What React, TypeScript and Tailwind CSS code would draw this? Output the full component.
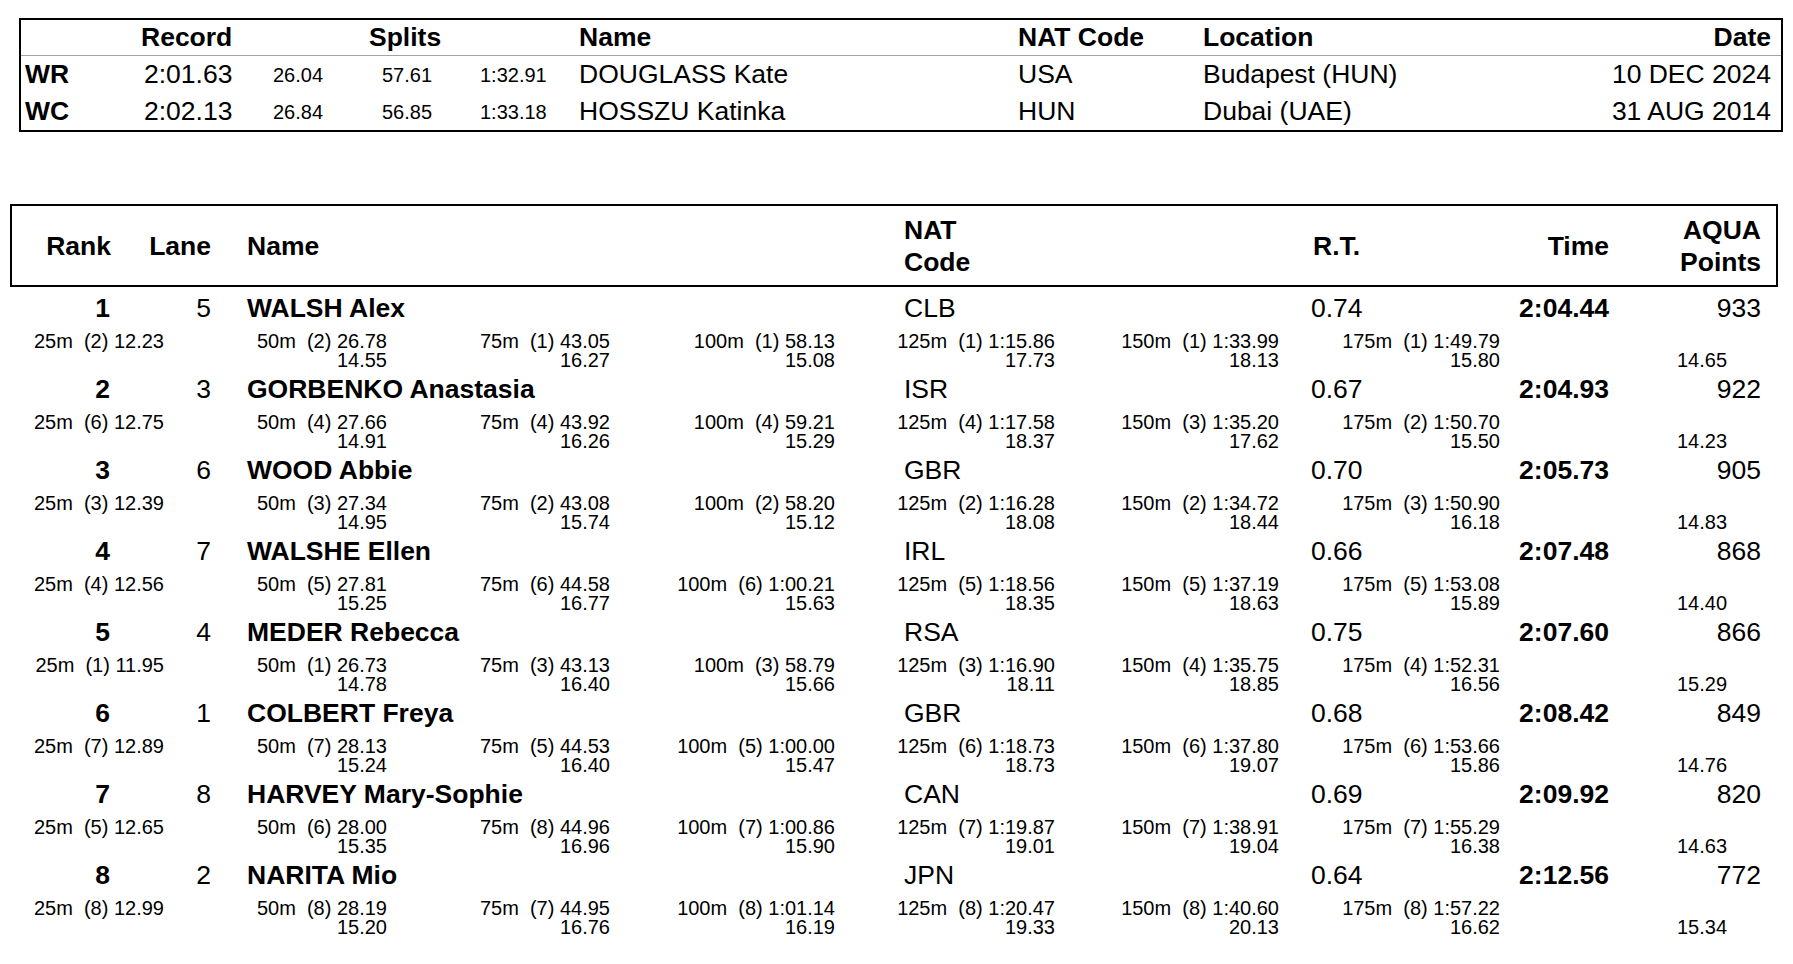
// 女子200m 結果表（記録欄＋順位表）
const records = [
  { code: "WR", time: "2:01.63", splits: ["26.04", "57.61", "1:32.91"], name: "DOUGLASS Kate", nat: "USA", loc: "Budapest (HUN)", date: "10 DEC 2024" },
  { code: "WC", time: "2:02.13", splits: ["26.84", "56.85", "1:33.18"], name: "HOSSZU Katinka", nat: "HUN", loc: "Dubai (UAE)", date: "31 AUG 2014" },
];

type Split = [string, string, string?];

type Athlete = {
  rank: number;
  lane: number;
  name: string;
  nat: string;
  rt: string;
  time: string;
  points: number;
  splits: Split[];
  last: string;
};

const athletes: Athlete[] = [
  { rank: 1, lane: 5, name: "WALSH Alex", nat: "CLB", rt: "0.74", time: "2:04.44", points: 933, last: "14.65",
    splits: [["2", "12.23"], ["2", "26.78", "14.55"], ["1", "43.05", "16.27"], ["1", "58.13", "15.08"], ["1", "1:15.86", "17.73"], ["1", "1:33.99", "18.13"], ["1", "1:49.79", "15.80"]] },
  { rank: 2, lane: 3, name: "GORBENKO Anastasia", nat: "ISR", rt: "0.67", time: "2:04.93", points: 922, last: "14.23",
    splits: [["6", "12.75"], ["4", "27.66", "14.91"], ["4", "43.92", "16.26"], ["4", "59.21", "15.29"], ["4", "1:17.58", "18.37"], ["3", "1:35.20", "17.62"], ["2", "1:50.70", "15.50"]] },
  { rank: 3, lane: 6, name: "WOOD Abbie", nat: "GBR", rt: "0.70", time: "2:05.73", points: 905, last: "14.83",
    splits: [["3", "12.39"], ["3", "27.34", "14.95"], ["2", "43.08", "15.74"], ["2", "58.20", "15.12"], ["2", "1:16.28", "18.08"], ["2", "1:34.72", "18.44"], ["3", "1:50.90", "16.18"]] },
  { rank: 4, lane: 7, name: "WALSHE Ellen", nat: "IRL", rt: "0.66", time: "2:07.48", points: 868, last: "14.40",
    splits: [["4", "12.56"], ["5", "27.81", "15.25"], ["6", "44.58", "16.77"], ["6", "1:00.21", "15.63"], ["5", "1:18.56", "18.35"], ["5", "1:37.19", "18.63"], ["5", "1:53.08", "15.89"]] },
  { rank: 5, lane: 4, name: "MEDER Rebecca", nat: "RSA", rt: "0.75", time: "2:07.60", points: 866, last: "15.29",
    splits: [["1", "11.95"], ["1", "26.73", "14.78"], ["3", "43.13", "16.40"], ["3", "58.79", "15.66"], ["3", "1:16.90", "18.11"], ["4", "1:35.75", "18.85"], ["4", "1:52.31", "16.56"]] },
  { rank: 6, lane: 1, name: "COLBERT Freya", nat: "GBR", rt: "0.68", time: "2:08.42", points: 849, last: "14.76",
    splits: [["7", "12.89"], ["7", "28.13", "15.24"], ["5", "44.53", "16.40"], ["5", "1:00.00", "15.47"], ["6", "1:18.73", "18.73"], ["6", "1:37.80", "19.07"], ["6", "1:53.66", "15.86"]] },
  { rank: 7, lane: 8, name: "HARVEY Mary-Sophie", nat: "CAN", rt: "0.69", time: "2:09.92", points: 820, last: "14.63",
    splits: [["5", "12.65"], ["6", "28.00", "15.35"], ["8", "44.96", "16.96"], ["7", "1:00.86", "15.90"], ["7", "1:19.87", "19.01"], ["7", "1:38.91", "19.04"], ["7", "1:55.29", "16.38"]] },
  { rank: 8, lane: 2, name: "NARITA Mio", nat: "JPN", rt: "0.64", time: "2:12.56", points: 772, last: "15.34",
    splits: [["8", "12.99"], ["8", "28.19", "15.20"], ["7", "44.95", "16.76"], ["8", "1:01.14", "16.19"], ["8", "1:20.47", "19.33"], ["8", "1:40.60", "20.13"], ["8", "1:57.22", "16.62"]] },
];

const distances = ["25m", "50m", "75m", "100m", "125m", "150m", "175m"];
// 各スプリット列の幅（右揃え）
const splitWidths = ["w-[164px]", "w-[223px]", "w-[223px]", "w-[225px]", "w-[220px]", "w-[224px]", "w-[221px]"];

function RecordTable() {
  return (
    <div className="ml-[19px] w-[1764px] border-2 border-black">
      <div className="flex h-[36px] items-center border-b border-[#a3a3a3] text-[26.5px] font-bold leading-none">
        <div className="w-[120px]" />
        <div className="w-[228px]">Record</div>
        <div className="w-[210px]">Splits</div>
        <div className="w-[439px]">Name</div>
        <div className="w-[185px]">NAT Code</div>
        <div className="flex-1">Location</div>
        <div className="pr-[10px]">Date</div>
      </div>
      {records.map((r) => (
        <div key={r.code} className="flex h-[37px] items-center leading-none">
          <div className="w-[120px] pl-[4px] text-[26.5px] font-bold">{r.code}</div>
          <div className="w-[132px] pl-[3px] text-[26.5px]">{r.time}</div>
          <div className="w-[109px] text-[20px]">{r.splits[0]}</div>
          <div className="w-[98px] text-[20px]">{r.splits[1]}</div>
          <div className="w-[99px] text-[20px]">{r.splits[2]}</div>
          <div className="w-[439px] text-[26.5px]">{r.name}</div>
          <div className="w-[185px] text-[26.5px]">{r.nat}</div>
          <div className="flex-1 text-[26.5px]">{r.loc}</div>
          <div className="pr-[10px] text-[26.5px]">{r.date}</div>
        </div>
      ))}
    </div>
  );
}

function ResultHeader() {
  return (
    <div className="ml-[10px] flex h-[83px] w-[1768px] items-center border-2 border-black text-[26.5px] font-bold leading-[32px]">
      <div className="w-[99px] text-right">Rank</div>
      <div className="w-[100px] text-right">Lane</div>
      <div className="w-[693px] pl-[36px]">Name</div>
      <div className="w-[407px]">
        NAT
        <br />
        Code
      </div>
      <div className="w-[139px] pl-[2px]">R.T.</div>
      <div className="w-[159px] text-right">Time</div>
      <div className="w-[152px] text-right">
        AQUA
        <br />
        Points
      </div>
    </div>
  );
}

function AthleteRow({ a }: { a: Athlete }) {
  return (
    <div className="pb-[2px]">
      <div className="flex h-[34px] items-center text-[26.5px] leading-none">
        <div className="w-[110px] text-right font-bold">{a.rank}</div>
        <div className="w-[101px] text-right">{a.lane}</div>
        <div className="w-[693px] pl-[36px] font-bold">{a.name}</div>
        <div className="w-[407px]">{a.nat}</div>
        <div className="w-[139px]">{a.rt}</div>
        <div className="w-[159px] text-right font-bold">{a.time}</div>
        <div className="w-[152px] text-right">{a.points}</div>
      </div>
      <div className="mt-[7px] flex text-[20px] leading-[19px] whitespace-pre">
        {a.splits.map((s, i) => (
          <div key={i} className={`${splitWidths[i]} text-right`}>
            <div>{`${distances[i]}  (${s[0]}) ${s[1]}`}</div>
            {s[2] ? <div>{s[2]}</div> : null}
          </div>
        ))}
        <div className="pl-[177px]">
          <div>&nbsp;</div>
          <div>{a.last}</div>
        </div>
      </div>
    </div>
  );
}

export default function App() {
  return (
    <div className="min-h-[964px] w-[1793px] bg-white pt-[18px] text-black" style={{ fontFamily: '"Liberation Sans", Arial, sans-serif' }}>
      <RecordTable />
      <div className="mt-[72px]">
        <ResultHeader />
        <div className="pt-[4px]">
          {athletes.map((a) => (
            <AthleteRow key={a.rank} a={a} />
          ))}
        </div>
      </div>
    </div>
  );
}
